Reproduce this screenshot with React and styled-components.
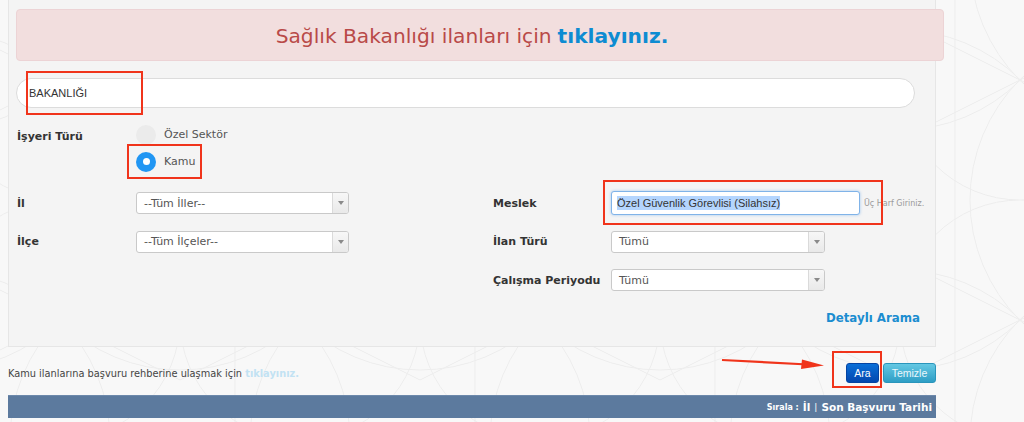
import React from "react";
import styled, { createGlobalStyle } from "styled-components";

const patternSvg = `<svg xmlns='http://www.w3.org/2000/svg' width='240' height='240'><g fill='none' stroke='#ededed' stroke-width='1'><circle cx='0' cy='0' r='170'/><circle cx='240' cy='0' r='170'/><circle cx='0' cy='240' r='170'/><circle cx='240' cy='240' r='170'/><circle cx='120' cy='120' r='120'/><line x1='0' y1='60' x2='240' y2='180'/><line x1='0' y1='180' x2='240' y2='60'/><line x1='55' y1='0' x2='55' y2='240'/></g></svg>`;

const GlobalStyle = createGlobalStyle`
  html, body {
    margin: 0;
    padding: 0;
    background-color: #f8f8f8;
    background-image: url("data:image/svg+xml,${encodeURIComponent(patternSvg)}");
    background-position: -60px -40px;
    font-family: "DejaVu Sans", Verdana, sans-serif;
    color: #444;
  }
`;

const Page = styled.div`
  width: 928px;
  margin-left: 8px;
`;

const Panel = styled.div`
  box-sizing: border-box;
  width: 928px;
  height: 347px;
  background: #f4f4f4;
  border: 1px solid #e6e6e6;
  border-top: none;
  padding-top: 9px;
`;

const Alert = styled.div`
  box-sizing: border-box;
  width: 928px;
  height: 52px;
  margin-left: 7px;
  background: #f2dede;
  border: 1px solid #ecd3d5;
  border-radius: 4px;
  display: flex;
  align-items: center;
  justify-content: center;
  font-size: 20.2px;
  color: #b94a48;
  padding: 1px 16px 0 0;
`;

const AlertLink = styled.a`
  color: #0e8cd2;
  font-weight: bold;
  text-decoration: none;
  margin-left: 6px;
`;

const Annotated = styled.div`
  position: relative;
`;

const RedBox = styled.div`
  position: absolute;
  border: 2px solid #f0341b;
  box-sizing: border-box;
  pointer-events: none;
`;

const SearchWrap = styled(Annotated)`
  margin: 17px 0 0 7px;
  width: 899px;
`;

const SearchInput = styled.div`
  box-sizing: border-box;
  height: 30px;
  background: #fff;
  border: 1px solid #dcdcdc;
  border-radius: 15px;
  display: flex;
  align-items: center;
  padding-left: 12px;
  font-family: "Liberation Sans", Arial, sans-serif;
  font-size: 11px;
  color: #333;
`;

const TypeRow = styled.div`
  display: flex;
  margin: 13px 0 0 8px;
`;

const Label = styled.div`
  width: ${(p) => p.$w || 119}px;
  flex: none;
  font-weight: bold;
  font-size: 11px;
  color: #333;
`;

const TypeLabel = styled(Label)`
  padding-top: 9px;
`;

const RadioGroup = styled.div`
  display: flex;
  flex-direction: column;
`;

const RadioOption = styled(Annotated)`
  display: flex;
  align-items: center;
  height: 27px;
  font-size: 11px;
  color: #555;
`;

const RadioDot = styled.span`
  box-sizing: border-box;
  width: 20px;
  height: 20px;
  border-radius: 50%;
  margin-right: 8px;
  background: ${(p) => (p.$checked ? "#2196f3" : "#ebebeb")};
  display: flex;
  align-items: center;
  justify-content: center;
  &::after {
    content: "";
    display: ${(p) => (p.$checked ? "block" : "none")};
    width: 7px;
    height: 7px;
    border-radius: 50%;
    background: #fff;
  }
`;

const Columns = styled.div`
  display: flex;
  margin: 9px 0 0 8px;
`;

const Column = styled.div`
  width: ${(p) => p.$w}px;
  flex: none;
  display: flex;
  flex-direction: column;
`;

const FieldRow = styled.div`
  display: flex;
  align-items: center;
  height: 38.5px;
`;

const Select = styled.div`
  box-sizing: border-box;
  width: ${(p) => p.$w}px;
  height: 22px;
  border: 1px solid #c9c9c9;
  border-radius: 3px;
  background: #fff;
  display: flex;
  align-items: center;
  font-size: 11px;
  color: #555;
  overflow: hidden;
`;

const SelectText = styled.span`
  flex: 1;
  padding-left: 7px;
`;

const SelectArrow = styled.span`
  width: 15px;
  height: 100%;
  border-left: 1px solid #dadada;
  background: linear-gradient(#f7f7f7, #e9e9e9);
  display: flex;
  align-items: center;
  justify-content: center;
  &::after {
    content: "";
    border-left: 3px solid transparent;
    border-right: 3px solid transparent;
    border-top: 4px solid #8a8a8a;
  }
`;

const MeslekWrap = styled(Annotated)`
  display: flex;
  align-items: center;
`;

const TextInput = styled.div`
  box-sizing: border-box;
  width: 249px;
  height: 24px;
  border: 1px solid #80b3e8;
  box-shadow: 0 0 3px rgba(90, 160, 235, 0.55);
  border-radius: 3px;
  background: #fff;
  display: flex;
  align-items: center;
  padding-left: 5px;
  font-family: "Liberation Sans", Arial, sans-serif;
  font-size: 11px;
  color: #333;
`;

const Selected = styled.span`
  background: #b4d5fe;
  padding: 1px 0;
`;

const Hint = styled.span`
  margin-left: 4px;
  font-size: 8px;
  color: #9a9a9a;
`;

const DetailRow = styled.div`
  display: flex;
  justify-content: flex-end;
  padding-right: 15px;
  margin-top: 10px;
`;

const DetailLink = styled.a`
  font-size: 11.8px;
  font-weight: bold;
  color: #1b8dd0;
  text-decoration: none;
  line-height: 16px;
`;

const BottomRow = styled(Annotated)`
  display: flex;
  align-items: center;
  justify-content: space-between;
  margin-top: 16px;
  height: 20px;
`;

const GuideText = styled.div`
  font-size: 9.8px;
  color: #444;
  padding-top: 1px;
`;

const GuideLink = styled.a`
  color: #c2e2f3;
  font-weight: bold;
  text-decoration: none;
`;

const Buttons = styled.div`
  display: flex;
  gap: 4px;
`;

const Button = styled(Annotated)`
  box-sizing: border-box;
  height: 20px;
  width: ${(p) => p.$w}px;
  border-radius: 3px;
  display: flex;
  align-items: center;
  justify-content: center;
  font-family: "Liberation Sans", Arial, sans-serif;
  font-size: 10.5px;
  color: ${(p) => (p.$primary ? "#fff" : "#eaf7fc")};
  background: ${(p) =>
    p.$primary
      ? "linear-gradient(#0a6fd8, #0447ae)"
      : "linear-gradient(#64c8e3, #2e9ec5)"};
  border: 1px solid ${(p) => (p.$primary ? "#0444a3" : "#2a95bb")};
`;

const Arrow = styled.svg`
  position: absolute;
  left: 714px;
  top: -6px;
  width: 104px;
  height: 14px;
  overflow: visible;
`;

const SortBar = styled.div`
  box-sizing: border-box;
  margin-top: 12px;
  height: 23px;
  background: #5c7a9e;
  border-top: 1px solid #6d89ab;
  display: flex;
  align-items: center;
  justify-content: flex-end;
  padding-right: 4px;
  color: #fff;
  font-weight: bold;
  font-size: 10.5px;
`;

const SortSmall = styled.span`
  font-size: 8px;
  margin-right: 4px;
`;

const Sep = styled.span`
  font-weight: normal;
  margin: 0 4px;
  font-size: 9px;
`;

export default function App() {
  return (
    <Page>
      <GlobalStyle />
      <Panel>
        <Alert>
          Sağlık Bakanlığı ilanları için
          <AlertLink href="#">tıklayınız.</AlertLink>
        </Alert>

        <SearchWrap>
          <SearchInput>BAKANLIĞI</SearchInput>
          <RedBox style={{ left: 10, top: -7, width: 117, height: 44 }} />
        </SearchWrap>

        <TypeRow>
          <TypeLabel>İşyeri Türü</TypeLabel>
          <RadioGroup>
            <RadioOption>
              <RadioDot />
              Özel Sektör
            </RadioOption>
            <RadioOption>
              <RadioDot $checked />
              Kamu
              <RedBox style={{ left: -9, top: -4, width: 75, height: 35 }} />
            </RadioOption>
          </RadioGroup>
        </TypeRow>

        <Columns>
          <Column $w={476}>
            <FieldRow>
              <Label>İl</Label>
              <Select $w={213}>
                <SelectText>--Tüm İller--</SelectText>
                <SelectArrow />
              </Select>
            </FieldRow>
            <FieldRow>
              <Label>İlçe</Label>
              <Select $w={213}>
                <SelectText>--Tüm İlçeler--</SelectText>
                <SelectArrow />
              </Select>
            </FieldRow>
          </Column>
          <Column $w={440}>
            <FieldRow>
              <Label $w={118}>Meslek</Label>
              <MeslekWrap>
                <TextInput>
                  <Selected>Özel Güvenlik Görevlisi (Silahsız)</Selected>
                </TextInput>
                <Hint>Üç Harf Giriniz.</Hint>
                <RedBox style={{ left: -8, top: -11, width: 280, height: 45 }} />
              </MeslekWrap>
            </FieldRow>
            <FieldRow>
              <Label $w={118}>İlan Türü</Label>
              <Select $w={214}>
                <SelectText>Tümü</SelectText>
                <SelectArrow />
              </Select>
            </FieldRow>
            <FieldRow>
              <Label $w={118}>Çalışma Periyodu</Label>
              <Select $w={214}>
                <SelectText>Tümü</SelectText>
                <SelectArrow />
              </Select>
            </FieldRow>
          </Column>
        </Columns>

        <DetailRow>
          <DetailLink href="#">Detaylı Arama</DetailLink>
        </DetailRow>
      </Panel>

      <BottomRow>
        <GuideText>
          Kamu ilanlarına başvuru rehberine ulaşmak için{" "}
          <GuideLink href="#">tıklayınız.</GuideLink>
        </GuideText>
        <Buttons>
          <Button $primary $w={33}>
            Ara
            <RedBox style={{ left: -15, top: -13, width: 50, height: 37 }} />
          </Button>
          <Button $w={53}>Temizle</Button>
        </Buttons>
        <Arrow viewBox="0 0 104 14">
          <line x1="0" y1="3" x2="86" y2="7.5" stroke="#f0341b" strokeWidth="2.2" />
          <polygon points="80,2.5 102,8.5 79,12" fill="#f0341b" />
        </Arrow>
      </BottomRow>

      <SortBar>
        <SortSmall>Sırala :</SortSmall>
        İl
        <Sep>|</Sep>
        Son Başvuru Tarihi
      </SortBar>
    </Page>
  );
}
